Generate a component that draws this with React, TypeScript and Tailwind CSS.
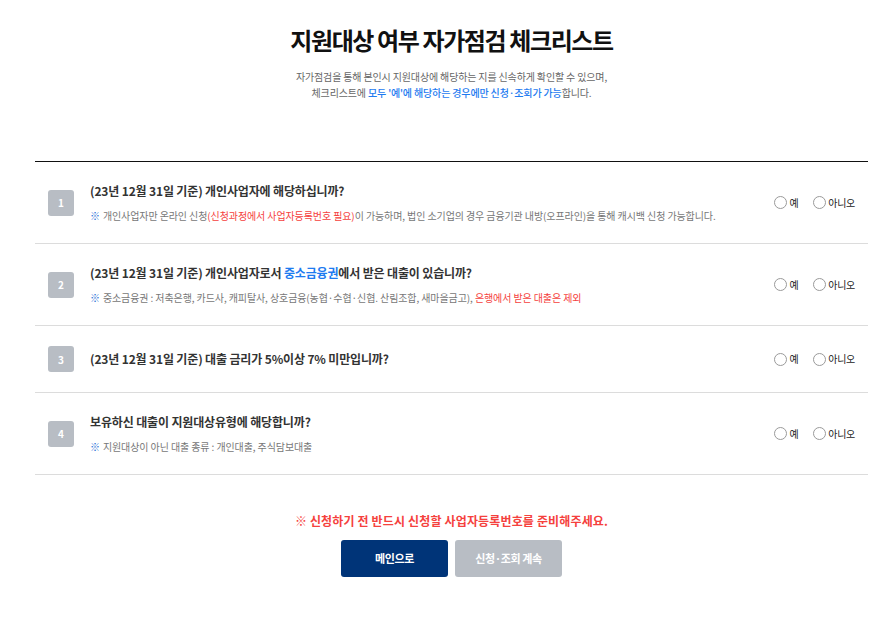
import React, { useState } from 'react';

type Question = {
  no: number;
  title: React.ReactNode;
  note?: React.ReactNode;
};

const questions: Question[] = [
  {
    no: 1,
    title: '(23년 12월 31일 기준) 개인사업자에 해당하십니까?',
    note: (
      <>
        개인사업자만 온라인 신청
        <span className="text-[#f5413d]">(신청과정에서 사업자등록번호 필요)</span>이 가능하며, 법인 소기업의 경우
        금융기관 내방(오프라인)을 통해 캐시백 신청 가능합니다.
      </>
    ),
  },
  {
    no: 2,
    title: (
      <>
        (23년 12월 31일 기준) 개인사업자로서 <span className="text-[#1e7bf0]">중소금융권</span>에서 받은 대출이
        있습니까?
      </>
    ),
    note: (
      <>
        중소금융권 : 저축은행, 카드사, 캐피탈사, 상호금융(농협·수협·신협. 산림조합, 새마을금고),{' '}
        <span className="text-[#f5413d]">은행에서 받은 대출은 제외</span>
      </>
    ),
  },
  {
    no: 3,
    title: '(23년 12월 31일 기준) 대출 금리가 5%이상 7% 미만입니까?',
  },
  {
    no: 4,
    title: '보유하신 대출이 지원대상유형에 해당합니까?',
    note: '지원대상이 아닌 대출 종류 : 개인대출, 주식담보대출',
  },
];

function Radio({ label, checked, onClick }: { label: string; checked: boolean; onClick: () => void }) {
  return (
    <label className="flex items-center gap-[2px] cursor-pointer" onClick={onClick}>
      <span className="w-[13px] h-[13px] rounded-full border border-[#9a9a9a] bg-white flex items-center justify-center">
        {checked && <span className="w-[7px] h-[7px] rounded-full bg-[#003478]" />}
      </span>
      <span className="text-[10px] leading-[14px] text-[#222] tracking-[-0.3px]">{label}</span>
    </label>
  );
}

export default function App() {
  const [answers, setAnswers] = useState<Record<number, string>>({});

  return (
    <div
      className="w-[884px] min-h-[618px] bg-white pl-[35px] pr-[16px]"
      style={{ fontFamily: '"Noto Sans CJK KR", "Noto Sans", sans-serif' }}
    >
      <div className="w-[833px]">
        <h1 className="pt-6 text-center text-[24px] leading-[32px] font-bold text-[#111] tracking-[-1.4px]">
          지원대상 여부 자가점검 체크리스트
        </h1>
        <p className="mt-[13px] text-center text-[10px] leading-[16px] text-[#666] tracking-[-0.15px]">
          자가점검을 통해 본인시 지원대상에 해당하는 지를 신속하게 확인할 수 있으며,
          <br />
          체크리스트에{' '}
          <span className="text-[#1e7bf0] font-medium">모두 '예'에 해당하는 경우에만 신청·조회가 가능</span>
          합니다.
        </p>

        <div className="mt-[60px] border-t border-[#111]">
          {questions.map((q) => (
            <div
              key={q.no}
              className="flex items-center justify-between border-b border-[#dcdcdc] pl-[13px] pr-[13px] py-5"
            >
              <div className="flex items-center gap-4">
                <div className="w-[26px] h-[26px] rounded-[3px] bg-[#b8bdc4] flex items-center justify-center text-white text-[10px] font-bold">
                  {q.no}
                </div>
                <div>
                  <p className="text-[12px] leading-[18px] font-bold text-[#333] tracking-[-0.15px]">{q.title}</p>
                  {q.note && (
                    <p className="mt-[9px] text-[10px] leading-[14px] text-[#777] tracking-[-0.1px]">
                      <span className="text-[#2a6fd6] mr-[3px]">※</span>
                      {q.note}
                    </p>
                  )}
                </div>
              </div>
              <div className="flex items-center gap-[15px]">
                <Radio
                  label="예"
                  checked={answers[q.no] === 'y'}
                  onClick={() => setAnswers({ ...answers, [q.no]: 'y' })}
                />
                <Radio
                  label="아니오"
                  checked={answers[q.no] === 'n'}
                  onClick={() => setAnswers({ ...answers, [q.no]: 'n' })}
                />
              </div>
            </div>
          ))}
        </div>

        <p className="mt-[37px] text-center text-[12px] leading-[18px] font-bold text-[#f5413d] tracking-[0.15px]">
          ※ 신청하기 전 반드시 신청할 사업자등록번호를 준비해주세요.
        </p>
        <div className="mt-[10px] flex justify-center gap-[7px]">
          <button className="w-[107px] h-[37px] rounded-[3px] bg-[#003478] text-white text-[11px] font-bold tracking-[-0.4px]">
            메인으로
          </button>
          <button className="w-[107px] h-[37px] rounded-[3px] bg-[#b8bdc4] text-white text-[11px] font-bold tracking-[-0.4px]">
            신청·조회 계속
          </button>
        </div>
      </div>
    </div>
  );
}
